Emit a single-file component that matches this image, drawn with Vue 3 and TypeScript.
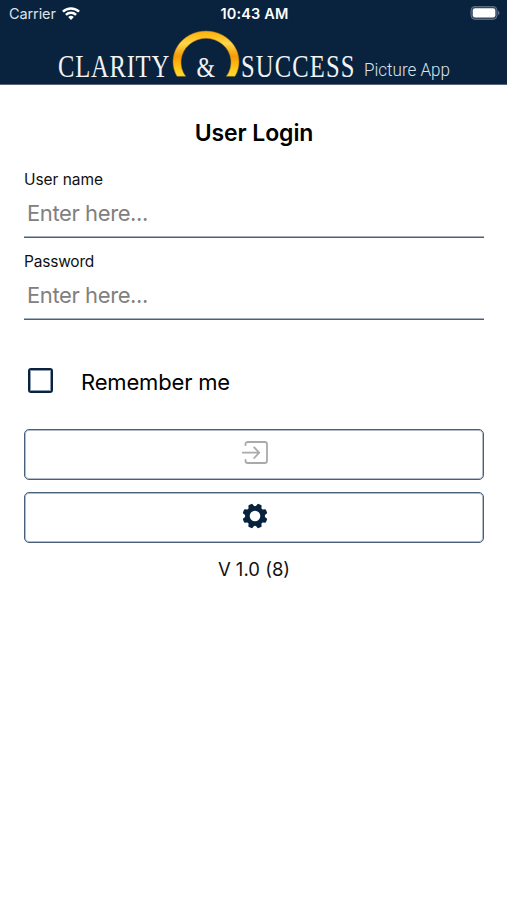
<script setup lang="ts">
import { ref } from 'vue'

const userName = ref('')
const password = ref('')
const remember = ref(false)
const teeth: number[] = [22.5, 67.5, 112.5, 157.5, 202.5, 247.5, 292.5, 337.5]
</script>

<template>
  <main class="screen">
    <header class="header">
      <div class="status">
        <div class="carrier">
          <span>Carrier</span>
          <svg class="wifi" width="18" height="14" viewBox="0 0 18 14" fill="none" stroke="#fff" stroke-width="2.5">
            <path d="M.9 4.6C5.4.3 12.6.3 17.1 4.6" />
            <path d="M3.9 7.8C6.8 5.1 11.2 5.1 14.1 7.8" />
            <path d="M6.2 10Q9 7.7 11.8 10L9 12.9Z" fill="#fff" stroke="none" />
          </svg>
        </div>
        <time class="clock">10:43 AM</time>
        <svg class="battery" width="31" height="15" viewBox="0 0 31 15">
          <rect x="2" y=".4" width="26" height="13" rx="4" fill="#34475f" stroke="#61718a" stroke-width="1" />
          <rect x="3.8" y="2.2" width="22.5" height="9.4" rx="2.3" fill="#fff" />
          <path d="M29.1 4.6Q31.6 6.9 29.1 9.2Z" fill="#71819a" />
        </svg>
      </div>
      <svg class="brand" width="507" height="57" viewBox="0 28 507 57">
        <defs>
          <linearGradient id="gold" x1="0" y1="31" x2="0" y2="77" gradientUnits="userSpaceOnUse">
            <stop offset="0" stop-color="#ffae0c" />
            <stop offset=".14" stop-color="#ffc222" />
            <stop offset=".27" stop-color="#ffd84c" />
            <stop offset=".42" stop-color="#f9b622" />
            <stop offset=".55" stop-color="#f39a08" />
            <stop offset=".72" stop-color="#ffb80f" />
            <stop offset="1" stop-color="#ffe135" />
          </linearGradient>
        </defs>
        <path fill="url(#gold)" stroke="#ac7412" stroke-width=".5" d="M177 76.3A33 30.6 0 1 1 235 76.3H226.3A25 24 0 1 0 185.7 76.3Z" />
        <g class="serif">
          <text transform="translate(58 76.7) scale(.78 1)" textLength="142.5" font-size="31.5">CLARITY</text>
          <text transform="translate(196.5 76.5) scale(.82 1)" font-size="29">&amp;</text>
          <text transform="translate(241 76.7) scale(.78 1)" textLength="145.5" font-size="31.5">SUCCESS</text>
        </g>
        <text class="product" x="364" y="76" textLength="86" lengthAdjust="spacingAndGlyphs">Picture App</text>
      </svg>
    </header>

    <form class="form" @submit.prevent>
      <h1>User Login</h1>
      <label class="field">
        <span class="caption user">User name</span>
        <input v-model="userName" type="text" placeholder="Enter here..." />
      </label>
      <label class="field">
        <span class="caption pass">Password</span>
        <input v-model="password" type="password" placeholder="Enter here..." />
      </label>
      <label class="remember">
        <input v-model="remember" type="checkbox" />
        <span>Remember me</span>
      </label>
      <button type="submit" aria-label="Log in">
        <svg width="28" height="26" viewBox="0 0 28 26" fill="none" stroke="#aaa" stroke-width="1.8" stroke-linecap="round" stroke-linejoin="round">
          <path d="M4.5 5.2V4.3Q4.5 2 6.8 2H23.7Q26 2 26 4.3V20.7Q26 23 23.7 23H6.8Q4.5 23 4.5 20.7V19.8" />
          <path d="M1.7 12.7H18M13.2 7.4L18.2 12.7L13.2 18" />
        </svg>
      </button>
      <button type="button" aria-label="Settings">
        <svg width="28" height="28" viewBox="-14 -14 28 28">
          <g fill="#09233f">
            <path v-for="angle in teeth" :key="angle" :transform="`rotate(${angle})`" d="M-3.4-8L-2.3-11.8Q-2-12.5-1.3-12.5H1.3Q2-12.5 2.3-11.8L3.4-8Z" />
            <path fill-rule="evenodd" d="M0-10A10 10 0 1 1 0 10A10 10 0 1 1 0-10ZM0-5.3A5.3 5.3 0 1 0 0 5.3A5.3 5.3 0 1 0 0-5.3Z" />
          </g>
        </svg>
      </button>
      <p class="version">V 1.0 (8)</p>
    </form>
  </main>
</template>

<style>
body { background: #fff; }
</style>

<style scoped>
* { box-sizing: border-box; }
.screen {
  min-height: 900px;
  background: #fff;
  color: #111;
  font-family: Inter, "Liberation Sans", sans-serif;
}
.header {
  height: 85px;
  overflow: hidden;
  background: #09233f;
  border-bottom: 1px solid #596580;
}
.status {
  display: grid;
  grid-template-columns: 1fr auto 1fr;
  align-items: center;
  height: 28px;
  padding: 0 7px 1px 9px;
  color: #fff;
}
.carrier {
  display: flex;
  align-items: center;
  gap: 6px;
  font-size: 14.5px;
  letter-spacing: -0.1px;
  color: #dce2e9;
}
.clock {
  font-size: 14.5px;
  font-weight: 600;
  letter-spacing: 0.15px;
}
.battery { justify-self: end; }
.brand { display: block; }
.serif {
  fill: #f2f3f5;
  font-family: "Liberation Serif", serif;
}
.product {
  fill: #dce2e9;
  font-family: Roboto, sans-serif;
  font-size: 18px;
  font-weight: 300;
}
.form {
  display: flex;
  flex-direction: column;
  padding: 34px 23px 0 24px;
}
h1 {
  margin: 0 0 17px;
  color: #000;
  font-size: 23px;
  line-height: 29px;
  font-weight: 600;
  text-align: center;
  letter-spacing: -0.1px;
}
.field {
  display: flex;
  flex-direction: column;
  height: 82px;
  padding-top: 5px;
}
.caption {
  font-size: 15.5px;
  line-height: 20px;
}
.caption.user { letter-spacing: -0.05px; }
.caption.pass { letter-spacing: -0.2px; }
.field input {
  width: 100%;
  height: 48px;
  margin: 0;
  padding: 0 3px 1px;
  border: 0;
  border-bottom: 1px solid #48607a;
  box-shadow: inset 0 -1px #a5b1be;
  border-radius: 0;
  outline: 0;
  background: transparent;
  color: #111;
  font: 22px Inter, sans-serif;
  letter-spacing: -0.4px;
}
.field input::placeholder { color: #808080; opacity: 1; }
.remember {
  display: flex;
  align-items: center;
  gap: 28px;
  height: 34px;
  margin: 36px 0 30px;
  padding-left: 4px;
  color: #000;
  font-size: 22px;
  letter-spacing: -0.17px;
}
.remember input {
  appearance: none;
  width: 25px;
  height: 25px;
  margin: 0 0 4px;
  border: 2px solid #09233f;
  box-shadow: inset 0 0 0 1px #8c9bab;
  border-radius: 3px;
}
.remember input:checked { background: #09233f; }
button {
  display: flex;
  align-items: center;
  justify-content: center;
  height: 51px;
  margin: 0 0 12px;
  padding: 0 0 3px 2px;
  border: 1px solid #48607a;
  box-shadow: inset 0 0 0 1px #b0bbc6;
  border-radius: 5px;
  background: #fff;
}
.version {
  margin: 1px 0 0;
  font-size: 18.5px;
  line-height: 26px;
  text-align: center;
}
</style>
